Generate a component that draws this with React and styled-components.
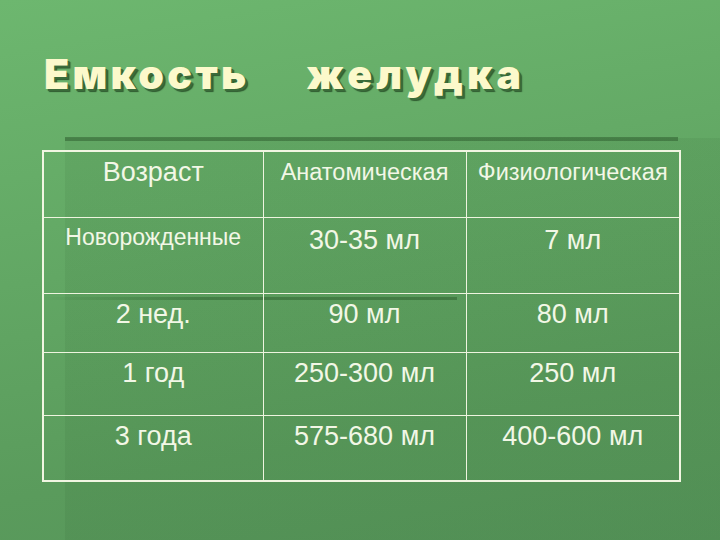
import React from "react";
import styled, { createGlobalStyle } from "styled-components";

const GlobalStyle = createGlobalStyle`
  html, body {
    margin: 0;
    padding: 0;
  }
  body {
    font-family: "Liberation Sans", Arial, sans-serif;
  }
`;

const Slide = styled.div`
  width: 720px;
  height: 540px;
  box-sizing: border-box;
  padding: 50px 0 0 44px;
  overflow: hidden;
  background:
    linear-gradient(rgba(48, 96, 48, 0.55), rgba(48, 96, 48, 0.55)) 65px 137px / 613px 4px no-repeat,
    linear-gradient(90deg, rgba(48, 96, 48, 0), rgba(48, 96, 48, 0.5) 40%, rgba(48, 96, 48, 0.55)) 40px 297px / 417px 3px no-repeat,
    linear-gradient(rgba(20, 60, 20, 0.07), rgba(20, 60, 20, 0.07)) 65px 138px / 655px 402px no-repeat,
    linear-gradient(170deg, #6db76f 0%, #64aa66 35%, #5a9b5c 75%, #56955a 100%);
`;

const Title = styled.h1`
  margin: 0;
  display: flex;
  gap: 57px;
  font-family: Inter, "DejaVu Sans", sans-serif;
  font-weight: 900;
  font-style: normal;
  font-size: 41px;
  line-height: 48px;
  color: #fcf9cb;
  text-shadow: 2px 2px 0 #3a6b3a, 3px 3px 1px #2f5b30;
`;

const Word = styled.span`
  letter-spacing: ${(p) => p.spacing}px;
`;

const Table = styled.table`
  margin-top: 52px;
  margin-left: -2px;
  width: 637px;
  border-collapse: collapse;
  table-layout: fixed;
  border: 2px solid #f1f6e2;
`;

const Row = styled.tr`
  height: ${(p) => p.h}px;
`;

const Cell = styled.td`
  border: 1px solid #eef4df;
  padding: ${(p) => p.pt ?? 4}px 0 0;
  vertical-align: top;
  text-align: center;
  white-space: nowrap;
  color: #f2f7e6;
  font-size: ${(p) => p.size ?? 27}px;
  line-height: 32px;
`;

const rows = [
  { h: 76, cells: [{ text: "Новорожденные", size: 23, pt: 3 }, { text: "30-35 мл", pt: 6 }, { text: "7 мл", pt: 6 }] },
  { h: 59, cells: [{ text: "2 нед." }, { text: "90 мл" }, { text: "80 мл" }] },
  { h: 63, cells: [{ text: "1 год" }, { text: "250-300 мл" }, { text: "250 мл" }] },
  { h: 66, cells: [{ text: "3 года" }, { text: "575-680 мл" }, { text: "400-600 мл" }] },
];

const App = () => {
  return (
    <Slide>
      <GlobalStyle />
      <Title>
        <Word spacing={3.3}>Емкость</Word>
        <Word spacing={4.2}>желудка</Word>
      </Title>
      <Table>
        <colgroup>
          <col style={{ width: 220 }} />
          <col style={{ width: 203 }} />
          <col style={{ width: 214 }} />
        </colgroup>
        <tbody>
          <Row h={66}>
            <Cell size={27}>Возраст</Cell>
            <Cell size={23.5}>Анатомическая</Cell>
            <Cell size={23.5}>Физиологическая</Cell>
          </Row>
          {rows.map((row, i) => (
            <Row key={i} h={row.h}>
              {row.cells.map((c, j) => (
                <Cell key={j} size={c.size} pt={c.pt}>
                  {c.text}
                </Cell>
              ))}
            </Row>
          ))}
        </tbody>
      </Table>
    </Slide>
  );
};

export default App;
